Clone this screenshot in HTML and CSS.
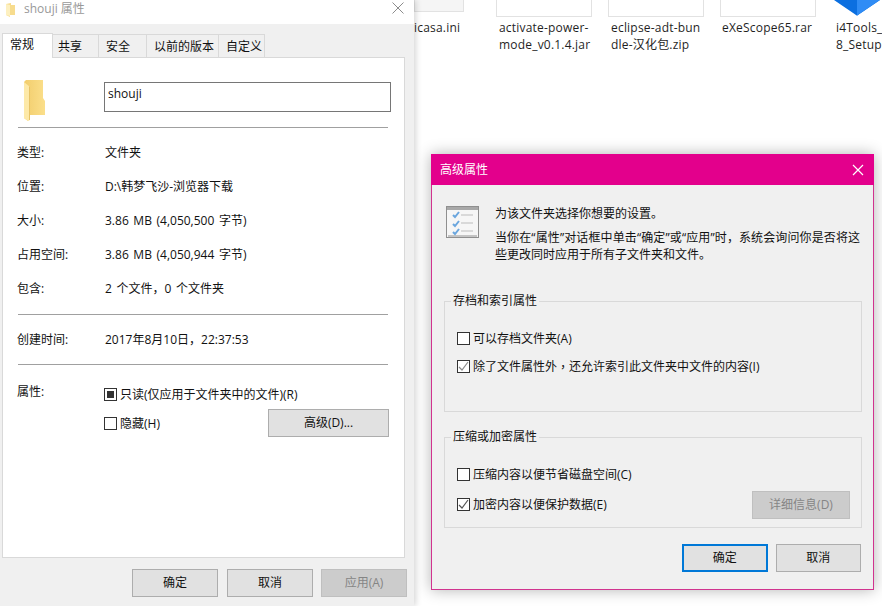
FILE: index.html
```html
<!DOCTYPE html>
<html lang="zh-CN">
<head>
<meta charset="utf-8">
<title>shouji 属性</title>
<link rel="stylesheet" href="styles.css">
</head>
<body>
<div class="desktop">
  <div class="file file-a"><div class="thumb"></div><div class="name">icasa.ini</div></div>
  <div class="file file-b"><div class="thumb"></div><div class="name">activate-power-<br>mode_v0.1.4.jar</div></div>
  <div class="file file-c"><div class="thumb"></div><div class="name">eclipse-adt-bun<br>dle-汉化包.zip</div></div>
  <div class="file file-d"><div class="thumb"></div><div class="name">eXeScope65.rar</div></div>
  <div class="file file-e">
    <svg class="i4" width="46" height="16" viewBox="0 0 46 16"><path d="M0 0H46V0L24 15Q23 16 22 15Z" fill="#0b6fe0"/><path d="M23 15.500L46 0H23Z" fill="#2f8cf5"/></svg>
    <div class="name">i4Tools_<br>8_Setup</div>
  </div>

  <section class="win props">
    <header class="props-title">
      <svg class="mini-folder" width="11" height="15" viewBox="0 0 11 15"><path d="M1 2L6 1V3H10V13H5L5 15L1 13Z" fill="#f7dc8e"/><path d="M1 2L5 3V14L1 13Z" fill="#fdf0c0"/></svg>
      <span>shouji 属性</span>
      <svg class="close" width="12" height="12" viewBox="0 0 12 12"><path d="M.5.500L11.500 11.500M11.500.500L.5 11.500" stroke="#8c8c8c" fill="none"/></svg>
    </header>
    <div class="props-body">
      <nav class="tabs">
        <span class="tab active tab1">常规</span><span class="tab tab2">共享</span><span class="tab tab3">安全</span><span class="tab tab4">以前的版本</span><span class="tab tab5">自定义</span>
      </nav>
      <div class="panel">
        <div class="head-row">
          <svg class="folder" width="22" height="41" viewBox="0 0 22 41"><defs><linearGradient id="fg" x1="0" x2="1" y1="0" y2="0"><stop offset="0" stop-color="#f2cd6c"/><stop offset="1" stop-color="#fbdf8b"/></linearGradient></defs><path d="M0 2L2 0H19V18L21 21V35H6V37L4 41L0 38Z" fill="url(#fg)"/><path d="M0 2L6 7V40L4 41L0 38Z" fill="#fde9a8"/><path d="M5 6L6 7V40L5 40Z" fill="#e8c468"/></svg>
          <div class="name-box">shouji</div>
        </div>
        <hr class="sep sep-a">
        <dl class="info">
          <dt>类型:</dt><dd>文件夹</dd>
          <dt>位置:</dt><dd>D:\韩梦飞沙-浏览器下载</dd>
          <dt>大小:</dt><dd>3.86 MB (4,050,500 字节)</dd>
          <dt>占用空间:</dt><dd>3.86 MB (4,050,944 字节)</dd>
          <dt>包含:</dt><dd>2 个文件<span class="tc">，</span>0 个文件夹</dd>
        </dl>
        <hr class="sep sep-b">
        <dl class="info created"><dt>创建时间:</dt><dd>2017年8月10日<span class="tc">，</span>22:37:53</dd></dl>
        <hr class="sep sep-c">
        <div class="attrs">
          <div class="attrs-label">属性:</div>
          <div class="attrs-main">
            <label class="check"><span class="box tri"></span>只读(仅应用于文件夹中的文件)(R)</label>
            <div class="attrs-second">
              <label class="check"><span class="box"></span>隐藏(H)</label>
              <button class="btn adv">高级(D)...</button>
            </div>
          </div>
        </div>
      </div>
      <footer class="props-foot">
        <button class="btn">确定</button><button class="btn">取消</button><button class="btn off">应用(A)</button>
      </footer>
    </div>
  </section>

  <section class="win dialog">
    <header class="dlg-title">
      <span>高级属性</span>
      <svg width="12" height="12" viewBox="0 0 12 12"><path d="M1 1L11 11M11 1L1 11" stroke="#fff" stroke-width="1.200" fill="none"/></svg>
    </header>
    <div class="dlg-body">
      <div class="intro">
        <svg class="list-icon" width="33" height="32" viewBox="0 0 33 32">
          <rect x=".5" y=".5" width="32" height="31" fill="#f6f6f6" stroke="#8f8f8f"/>
          <rect x="1" y="1" width="31" height="3" fill="#a8a8a8"/>
          <rect x="2" y="29" width="29" height="2" fill="#c4c4c4"/>
          <path d="M7 9L9 11L13 6M7 18L9 20L13 15M7 26L9 28L13 23" stroke="#6aa6de" stroke-width="2" fill="none"/>
          <path d="M15 9H27M15 17H27M15 25H27" stroke="#d0d0d0" stroke-width="1.500" fill="none"/>
        </svg>
        <div class="intro-text">
          <p class="p1">为该文件夹选择你想要的设置。</p>
          <p class="p2"><span class="wide">当你在“属性”对话框中单击“确定”或“应用”时<span class="tc">，</span>系统会询问你是否将这</span>些更改同时应用于所有子文件夹和文件。</p>
        </div>
      </div>
      <fieldset class="group g1">
        <legend>存档和索引属性</legend>
        <label class="check"><span class="box"></span>可以存档文件夹(A)</label>
        <label class="check"><span class="box"><svg width="11" height="11" viewBox="0 0 11 11"><path d="M1 6L4 9L10 1" stroke="#8a8a8a" stroke-width="1.200" fill="none"/></svg></span>除了文件属性外<span class="tc">，</span>还允许索引此文件夹中文件的内容(I)</label>
      </fieldset>
      <fieldset class="group g2">
        <legend>压缩或加密属性</legend>
        <label class="check"><span class="box"></span>压缩内容以便节省磁盘空间(C)</label>
        <div class="g2-row">
          <label class="check"><span class="box"><svg width="11" height="11" viewBox="0 0 11 11"><path d="M1 6L4 9L10 1" stroke="#555" stroke-width="1.200" fill="none"/></svg></span>加密内容以便保护数据(E)</label>
          <button class="btn off detail">详细信息(D)</button>
        </div>
      </fieldset>
      <footer class="dlg-foot">
        <button class="btn primary">确定</button><button class="btn">取消</button>
      </footer>
    </div>
  </section>
</div>
</body>
</html>
```
FILE: styles.css
```css
* { box-sizing: border-box; }
html, body { margin: 0; padding: 0; }
body {
  width: 882px; height: 606px; overflow: hidden; background: #fff; color: #111;
  font: 12px/17px "Open Sans", "Noto Sans CJK SC", sans-serif;
}
.desktop { position: relative; width: 882px; height: 606px; overflow: hidden; }
.tc { font-family: "Noto Sans CJK TC", sans-serif; }
.wide { letter-spacing: .12px; }

.file { position: absolute; top: 0; font-size: 12px; line-height: 17px; color: #1f1f1f; letter-spacing: .2px; }
.thumb { height: 17px; border: 1px solid #e2e2e2; border-top: 0; background: #fff; }
.name { margin-top: 2px; white-space: nowrap; }
.file-a { left: 414px; width: 50px; }
.file-a .thumb { height: 12px; background: #f5f5f5; }
.file-a .name { margin-top: 7px; }
.file-b { left: 496px; width: 96px; }
.file-b .name { padding-left: 3px; }
.file-c { left: 608px; width: 96px; }
.file-c .name { padding-left: 3px; }
.file-d { left: 720px; width: 96px; }
.file-d .name { padding-left: 2px; }
.file-e { left: 832px; width: 60px; }
.i4 { display: block; margin-left: 2px; }
.file-e .name { margin-top: 3px; padding-left: 4px; }

.win { position: absolute; }
.props {
  left: 0; top: 0; width: 414px; height: 606px; background: #f0f0f0;
  box-shadow: 2px 0 6px rgba(0,0,0,.16);
}
.props-title { height: 24px; background: #fff; display: flex; align-items: center; padding: 0 15px 0 5px; color: #999; }
.mini-folder { margin-right: 8px; margin-top: -6px; }
.props-title span { margin-top: -7px; }
.close { margin-left: auto; margin-top: -9px; margin-right: -5px; }
.props-body { padding: 9px 9px 0 2px; }
.tabs { display: flex; align-items: flex-end; height: 24px; position: relative; z-index: 1; }
.tab {
  height: 23px; line-height: 24px; padding-left: 7px; white-space: nowrap; background: #f0f0f0; color: #111;
  border: 1px solid #d9d9d9; border-left: 0; border-bottom: 0;
}
.tab.active {
  height: 25px; background: #fff; margin-bottom: -1px; border-left: 1px solid #d9d9d9; line-height: 21px; padding-left: 7px;
}
.tab1 { width: 51px; }
.tab2 { width: 46px; padding-left: 5px; }
.tab3 { width: 48px; }
.tab4 { width: 72px; }
.tab5 { width: 46px; }
.panel { width: 403px; height: 501px; background: #fff; border: 1px solid #d9d9d9; padding: 24px 0 0 14px; }
.head-row { display: flex; align-items: flex-start; height: 45px; }
.folder { margin-left: 7px; margin-top: -2px; }
.name-box {
  width: 287px; height: 30px; margin-left: 58px; border: 1px solid #767676;
  padding: 2px 3px; font-size: 12px; line-height: 18px; color: #111;
}
.sep { width: 370px; height: 1px; margin: 0 0 0 1px; border: 0; background: #a0a0a0; }
.info { margin: 0; display: grid; grid-template-columns: 88px 1fr; grid-auto-rows: 34px; align-items: center; padding-top: 7px; }
.info dt, .info dd { margin: 0; }
.info dd { word-spacing: 1.5px; }
.created { padding-top: 7px; }
.sep-b { margin-top: 9px; }
.sep-c { margin-top: 8px; }
.attrs { display: flex; padding-top: 18px; }
.attrs-label { width: 87px; }
.attrs-main { width: 285px; padding-top: 3px; }
.attrs-second { display: flex; justify-content: space-between; align-items: flex-start; margin-top: 12px; }
.check { display: flex; align-items: center; height: 17px; white-space: nowrap; }
.box {
  width: 13px; height: 13px; margin-right: 3px; border: 1px solid #333; background: #fff;
  display: inline-flex; align-items: center; justify-content: center; flex: none;
}
.box.tri::before { content: ""; width: 7px; height: 7px; background: #333; }
.btn {
  width: 86px; height: 28px; padding: 0; border: 1px solid #adadad; background: #e1e1e1; color: #111;
  font: inherit; line-height: 24px; text-align: center; display: block;
}
.btn.off { background: #cccccc; border-color: #bfbfbf; color: #858585; }
.adv { width: 121px; margin-top: -6px; }
.props-foot { display: flex; gap: 9px; padding: 11px 0 0 130px; width: 410px; }
.props-foot .btn:last-child { margin-left: -1px; }

.dialog {
  left: 431px; top: 154px; width: 443px; height: 436px; border: 1px solid #d1338f; background: #f0f0f0;
  box-shadow: 0 0 14px rgba(0,0,0,.3);
}
.dlg-title {
  margin: -1px -1px 0; height: 31px; background: #e3008c; color: #fff;
  display: flex; align-items: center; justify-content: space-between; padding: 0 10px 0 9px;
}
.dlg-body { padding: 0 12px; }
.intro { display: flex; height: 116px; padding: 21px 0 0 2px; }
.list-icon { flex: none; margin-right: 16px; }
.intro-text { width: 372px; }
.intro-text p { margin: 0; }
.p1 { margin-top: -2px !important; line-height: 20px; }
.p2 { margin-top: 4px !important; }
.group { margin: 0; padding: 0; border: 1px solid #d9d9d9; width: 418px; min-width: 0; }
.group legend { margin-left: 6px; padding: 0 2px; line-height: 14px; }
.group .check { margin-left: 12px; }
.g1 { height: 118px; margin-top: -7px; padding-top: 22px; }
.g1 .check + .check { margin-top: 11px; }
.g2 { height: 98px; margin-top: 18px; padding-top: 22px; }
.g2-row { display: flex; justify-content: space-between; align-items: flex-start; margin-top: 13px; padding-right: 11px; }
.detail { width: 98px; margin-top: -5px; }
.dlg-foot { display: flex; gap: 8px; padding: 16px 0 0 238px; }
.primary { border: 2px solid #0078d7; }
```
